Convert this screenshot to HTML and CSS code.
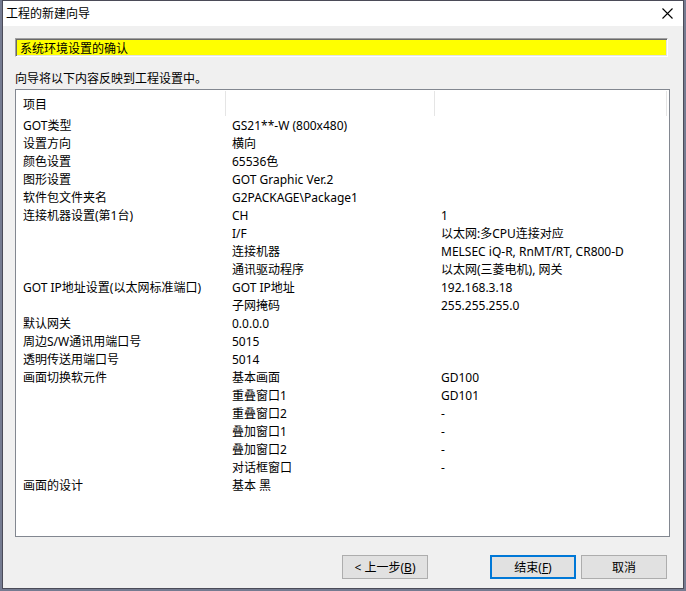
FILE: index.html
```html
<!DOCTYPE html>
<html lang="zh-CN">
<head>
    <meta charset="UTF-8">
    <meta name="viewport" content="width=device-width, initial-scale=1.0">
    <title>工程的新建向导</title>
    <link rel="stylesheet" href="styles.css">
</head>
<body>
    <div class="dialog">
        <div class="titlebar">
            <span class="title">工程的新建向导</span>
            <button class="close" type="button" aria-label="关闭">
                <svg width="11" height="11" viewBox="0 0 11 11"><path d="M0.5 0.5L10.5 10.5M10.5 0.5L0.5 10.5" stroke="#000" stroke-width="1.1" fill="none"/></svg>
            </button>
        </div>
        <div class="content">
            <div class="banner">系统环境设置的确认</div>
            <p class="intro">向导将以下内容反映到工程设置中。</p>
            <div class="list">
                <table>
                    <colgroup>
                        <col class="col-item">
                        <col class="col-value">
                        <col>
                    </colgroup>
                    <thead>
                        <tr><th>项目</th><th></th><th></th></tr>
                    </thead>
                    <tbody>
                        <tr><td>GOT类型</td><td>GS21**-W (800x480)</td><td></td></tr>
                        <tr><td>设置方向</td><td>横向</td><td></td></tr>
                        <tr><td>颜色设置</td><td>65536色</td><td></td></tr>
                        <tr><td>图形设置</td><td>GOT Graphic Ver.2</td><td></td></tr>
                        <tr><td>软件包文件夹名</td><td>G2PACKAGE\Package1</td><td></td></tr>
                        <tr><td>连接机器设置(第1台)</td><td>CH</td><td>1</td></tr>
                        <tr><td></td><td>I/F</td><td>以太网:多CPU连接对应</td></tr>
                        <tr><td></td><td>连接机器</td><td>MELSEC iQ-R, RnMT/RT, CR800-D</td></tr>
                        <tr><td></td><td>通讯驱动程序</td><td>以太网(三菱电机), 网关</td></tr>
                        <tr><td>GOT IP地址设置(以太网标准端口)</td><td>GOT IP地址</td><td>192.168.3.18</td></tr>
                        <tr><td></td><td>子网掩码</td><td>255.255.255.0</td></tr>
                        <tr><td>默认网关</td><td>0.0.0.0</td><td></td></tr>
                        <tr><td>周边S/W通讯用端口号</td><td>5015</td><td></td></tr>
                        <tr><td>透明传送用端口号</td><td>5014</td><td></td></tr>
                        <tr><td>画面切换软元件</td><td>基本画面</td><td>GD100</td></tr>
                        <tr><td></td><td>重叠窗口1</td><td>GD101</td></tr>
                        <tr><td></td><td>重叠窗口2</td><td>-</td></tr>
                        <tr><td></td><td>叠加窗口1</td><td>-</td></tr>
                        <tr><td></td><td>叠加窗口2</td><td>-</td></tr>
                        <tr><td></td><td>对话框窗口</td><td>-</td></tr>
                        <tr><td>画面的设计</td><td>基本 黑</td><td></td></tr>
                    </tbody>
                </table>
            </div>
            <div class="buttons">
                <button class="btn back" type="button">&lt; 上一步(<u>B</u>)</button>
                <button class="btn primary" type="button">结束(<u>F</u>)</button>
                <button class="btn" type="button">取消</button>
            </div>
        </div>
    </div>
</body>
</html>
```

FILE: styles.css
```css
* {
    box-sizing: border-box;
}
body {
    margin: 0;
    padding: 0 2px 2px;
    min-height: 100vh;
    display: flex;
    background-color: #757b91;
    color: #000;
    font-family: "Noto Sans", "Noto Sans CJK SC", sans-serif;
    font-size: 12px;
    line-height: 18px;
}
.dialog {
    flex: 1;
    display: flex;
    flex-direction: column;
    background-color: #f0f0f0;
    border: 1px solid #4b4b58;
}
.titlebar {
    display: flex;
    justify-content: space-between;
    align-items: center;
    height: 25px;
    padding-left: 3px;
    background-color: #fff;
}
.close {
    display: flex;
    align-items: center;
    justify-content: center;
    width: 31px;
    height: 25px;
    padding: 0;
    border: none;
    background: none;
}
.close:hover {
    background-color: #e81123;
}
.content {
    flex: 1;
    display: flex;
    flex-direction: column;
    padding: 12px 13px 9px 12px;
}
.banner {
    height: 19px;
    margin-right: 2px;
    padding-left: 4px;
    line-height: 19px;
    background-color: #ff0;
    border: 1px solid;
    border-color: #a0a0a0 #fff #fff #a0a0a0;
    box-shadow: inset 1px 1px #696969, inset -1px -1px #e3e3e3;
}
.intro {
    margin: 13px 0 1px;
}
.list {
    flex: 1;
    padding: 1px 2px 1px 1px;
    background-color: #fff;
    border: 1px solid #828790;
}
table {
    width: 100%;
    table-layout: fixed;
    border-collapse: separate;
    border-spacing: 0;
}
.col-item,
.col-value {
    width: 209px;
}
th {
    height: 25px;
    padding: 2px 6px 0;
    text-align: left;
    font-weight: normal;
    border-right: 1px solid #e5e5e5;
}
td {
    height: 18px;
    padding: 2px 6px 0;
    line-height: 16px;
    white-space: nowrap;
}
.buttons {
    display: flex;
    justify-content: flex-end;
    gap: 5px;
    margin-top: 18px;
    padding-right: 3px;
}
.btn {
    width: 86px;
    height: 24px;
    padding: 1px 0 0;
    font: inherit;
    color: #000;
    background-color: #e1e1e1;
    border: 1px solid #adadad;
}
.btn.back {
    margin-right: 57px;
}
.btn.primary {
    border: 2px solid #0078d7;
}
.btn:hover {
    background-color: #e5f1fb;
}
```
